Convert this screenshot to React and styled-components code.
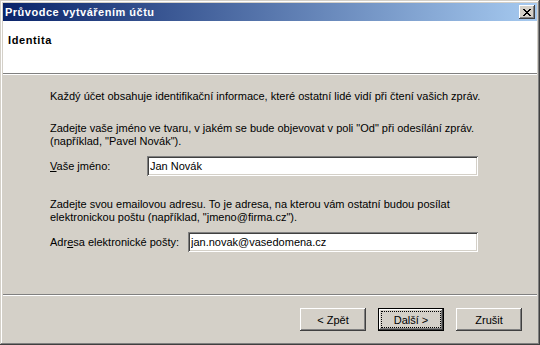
import React from 'react'
import styled, { createGlobalStyle, css } from 'styled-components'

const GlobalStyle = createGlobalStyle`
  html, body {
    margin: 0;
    padding: 0;
    background: #d4d0c8;
  }
  body {
    font-family: 'Liberation Sans', Arial, sans-serif;
    font-size: 11px;
    color: #000;
  }
`

// classic 3d edges
const raised = css`
  box-shadow:
    inset -1px -1px 0 #404040,
    inset 1px 1px 0 #ffffff,
    inset -2px -2px 0 #808080;
`

const sunken = css`
  box-shadow:
    inset 1px 1px 0 #808080,
    inset -1px -1px 0 #ffffff,
    inset 2px 2px 0 #404040,
    inset -2px -2px 0 #d4d0c8;
`

const CloseIcon = () => (
  <svg width="8" height="7" viewBox="0 0 8 7" shapeRendering="crispEdges">
    <path
      d="M0 0h2v1h-2zM6 0h2v1h-2zM1 1h2v1h-2zM5 1h2v1h-2zM2 2h4v1h-4zM3 3h2v1h-2zM2 4h4v1h-4zM1 5h2v1h-2zM5 5h2v1h-2zM0 6h2v1h-2zM6 6h2v1h-2z"
      fill="#000"
    />
  </svg>
)

export default function App() {
  return (
    <>
      <GlobalStyle />
      <Window>
        <TitleBar>
          <Title>Průvodce vytvářením účtu</Title>
          <CloseButton>
            <CloseIcon />
          </CloseButton>
        </TitleBar>

        <Header>
          <HeaderTitle>Identita</HeaderTitle>
        </Header>

        <Body>
          <Section>
            <Para>
              Každý účet obsahuje identifikační informace, které ostatní lidé
              vidí při čtení vašich zpráv.
            </Para>
          </Section>

          <Section>
            <Para>
              Zadejte vaše jméno ve tvaru, v jakém se bude objevovat v poli "Od"
              při odesílání zpráv.
              <br />
              (například, "Pavel Novák").
            </Para>
            <Field>
              <Label $width={97}>
                <u>V</u>aše jméno:
              </Label>
              <Input defaultValue="Jan Novák" />
            </Field>
          </Section>

          <Section $spaced>
            <Para>
              Zadejte svou emailovou adresu. To je adresa, na kterou vám ostatní
              budou posílat
              <br />
              elektronickou poštu (například, "jmeno@firma.cz").
            </Para>
            <Field>
              <Label $width={138}>
                Adr<u>e</u>sa elektronické pošty:
              </Label>
              <Input defaultValue="jan.novak@vasedomena.cz" />
            </Field>
          </Section>
        </Body>

        <Footer>
          <Separator />
          <Buttons>
            <Button>&lt; Zpět</Button>
            <Button $default>
              <Focus>Další &gt;</Focus>
            </Button>
            <Button>Zrušit</Button>
          </Buttons>
        </Footer>
      </Window>
    </>
  )
}

const Window = styled.div`
  width: 540px;
  height: 345px;
  box-sizing: border-box;
  padding: 3px;
  background: #d4d0c8;
  display: flex;
  flex-direction: column;
  box-shadow:
    inset -1px -1px 0 #404040,
    inset 1px 1px 0 #d4d0c8,
    inset -2px -2px 0 #808080,
    inset 2px 2px 0 #ffffff;
`

const TitleBar = styled.div`
  height: 18px;
  flex-shrink: 0;
  display: flex;
  align-items: center;
  justify-content: space-between;
  padding: 0 2px 0 2px;
  background: linear-gradient(to right, #0a246a, #a6caf0);
`

const Title = styled.div`
  color: #fff;
  font-weight: bold;
  font-size: 11px;
  letter-spacing: 0.5px;
`

const CloseButton = styled.div`
  width: 16px;
  height: 14px;
  box-sizing: border-box;
  background: #d4d0c8;
  display: flex;
  align-items: center;
  justify-content: center;
  padding-top: 1px;
  ${raised};
`

const Header = styled.div`
  height: 53px;
  flex-shrink: 0;
  box-sizing: border-box;
  background: #fff;
  border-bottom: 1px solid #808080;
  box-shadow: 0 1px 0 #ffffff;
  padding: 13px 0 0 5px;
`

const HeaderTitle = styled.div`
  font-weight: bold;
  font-size: 11px;
  line-height: 13px;
  letter-spacing: 0.6px;
`

const Body = styled.div`
  flex: 1;
  margin-top: 1px;
  padding: 15px 0 0 47px;
  display: flex;
  flex-direction: column;
  gap: 19px;
`

const Section = styled.div`
  display: flex;
  flex-direction: column;
  gap: 8px;
  margin-top: ${p => (p.$spaced ? 3 : 0)}px;
`

const Para = styled.p`
  margin: 0;
  line-height: 13px;
  white-space: nowrap;
`

const Field = styled.div`
  display: flex;
  align-items: center;
`

const Label = styled.label`
  width: ${p => p.$width}px;
  flex-shrink: 0;
  u {
    text-decoration: underline;
    text-underline-offset: 1px;
  }
`

const Input = styled.input`
  width: 331px;
  height: 20px;
  margin-left: auto;
  margin-right: 59px;
  box-sizing: border-box;
  border: none;
  outline: none;
  padding: 0 3px;
  font-family: inherit;
  font-size: 11px;
  color: #000;
  background: #fff;
  ${sunken};
`

const Footer = styled.div`
  flex-shrink: 0;
  display: flex;
  flex-direction: column;
`

const Separator = styled.div`
  height: 1px;
  background: #808080;
  border-bottom: 1px solid #ffffff;
`

const Buttons = styled.div`
  display: flex;
  justify-content: flex-end;
  gap: 12px;
  padding: 12px 15px 11px 0;
`

const Button = styled.div`
  width: 66px;
  height: 23px;
  box-sizing: border-box;
  background: #d4d0c8;
  display: flex;
  align-items: center;
  justify-content: center;
  ${raised};

  ${p =>
    p.$default &&
    css`
      box-shadow:
        inset 0 0 0 1px #000,
        inset -2px -2px 0 #404040,
        inset 2px 2px 0 #ffffff,
        inset -3px -3px 0 #808080;
    `}
`

const Focus = styled.span`
  display: flex;
  align-items: center;
  justify-content: center;
  width: 58px;
  height: 15px;
  outline: 1px dotted #000;
  outline-offset: 0;
`
